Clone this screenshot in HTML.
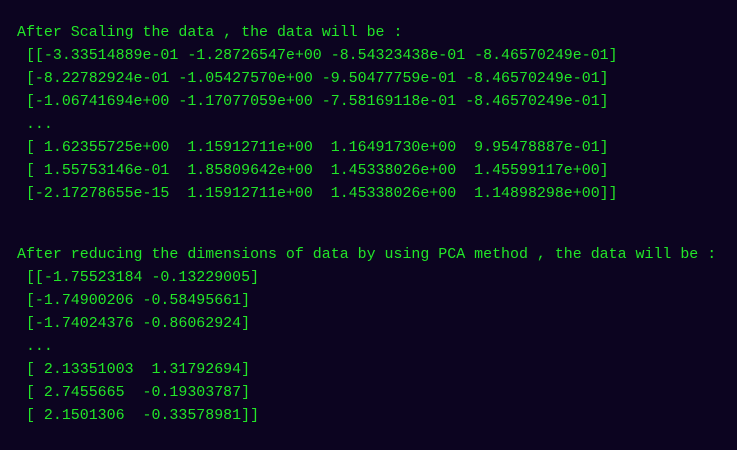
<!DOCTYPE html>
<html><head><style>
html,body{margin:0;padding:0;background:#0c0420;width:737px;height:450px;overflow:hidden}
pre{margin:0;position:absolute;left:17px;font-family:"Liberation Mono",monospace;font-size:14.95px;line-height:23px;color:#22e628}
</style></head><body>
<pre style="top:22px">After Scaling the data , the data will be :
 [[-3.33514889e-01 -1.28726547e+00 -8.54323438e-01 -8.46570249e-01]
 [-8.22782924e-01 -1.05427570e+00 -9.50477759e-01 -8.46570249e-01]
 [-1.06741694e+00 -1.17077059e+00 -7.58169118e-01 -8.46570249e-01]
 ...
 [ 1.62355725e+00  1.15912711e+00  1.16491730e+00  9.95478887e-01]
 [ 1.55753146e-01  1.85809642e+00  1.45338026e+00  1.45599117e+00]
 [-2.17278655e-15  1.15912711e+00  1.45338026e+00  1.14898298e+00]]</pre>
<pre style="top:244px">After reducing the dimensions of data by using PCA method , the data will be :
 [[-1.75523184 -0.13229005]
 [-1.74900206 -0.58495661]
 [-1.74024376 -0.86062924]
 ...
 [ 2.13351003  1.31792694]
 [ 2.7455665  -0.19303787]
 [ 2.1501306  -0.33578981]]</pre>
</body></html>
